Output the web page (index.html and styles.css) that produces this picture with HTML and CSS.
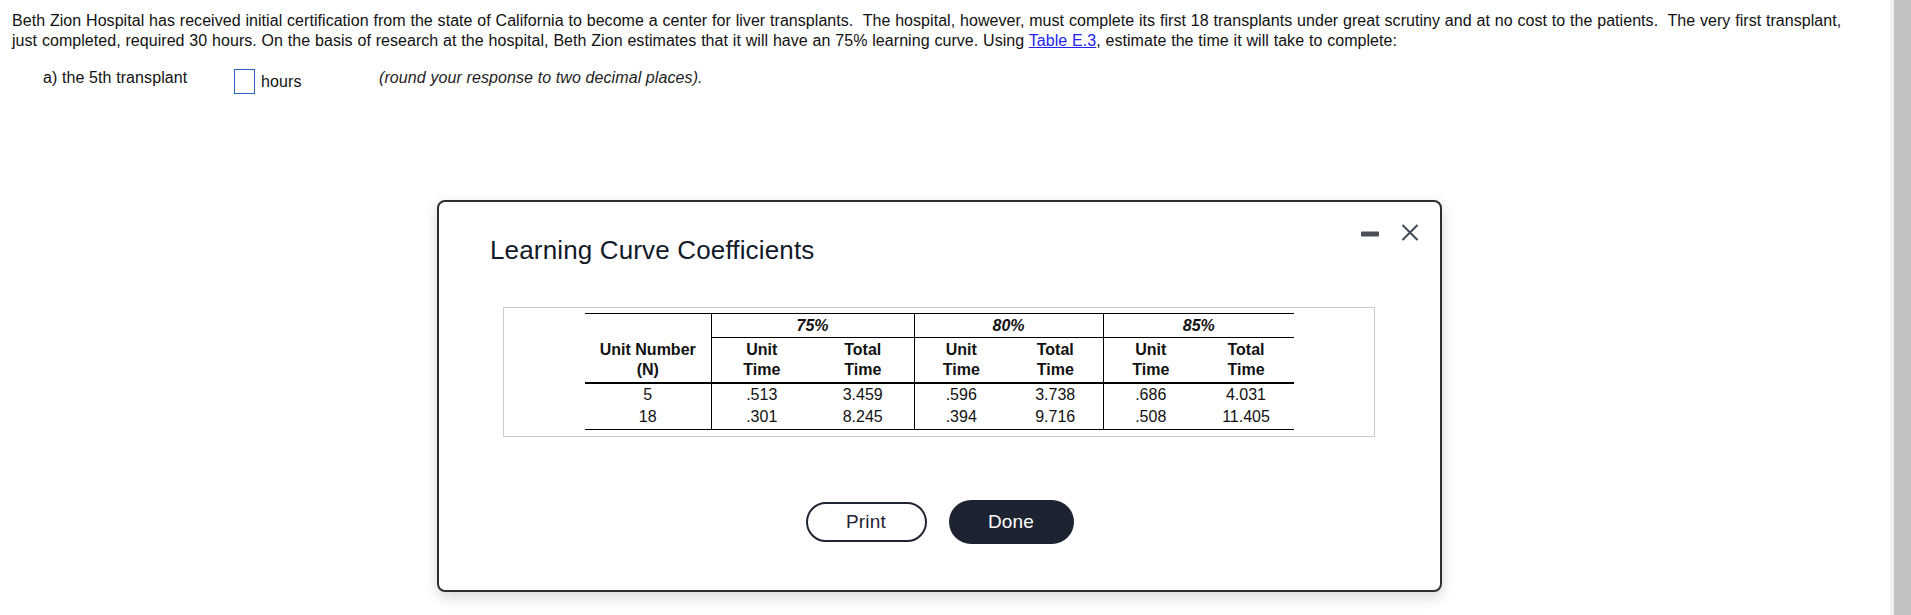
FILE: index.html
```html
<!DOCTYPE html>
<html lang="en">
<head>
<meta charset="utf-8">
<title>Learning Curve Coefficients</title>
<link rel="stylesheet" href="styles.css">
</head>
<body>
<div class="app">
  <main class="main">
    <p class="intro">Beth Zion Hospital has received initial certification from the state of California to become a center for liver transplants.&nbsp; The hospital, however, must complete its first 18 transplants under great scrutiny and at no cost to the patients.&nbsp; The very first transplant, just completed, required 30 hours. On the basis of research at the hospital, Beth Zion estimates that it will have an 75% learning curve. Using <a class="link" href="#">Table E.3</a>, estimate the time it will take to complete:</p>
    <div class="question">
      <span class="q-label">a) the 5th transplant</span>
      <span class="answer-box"></span>
      <span class="unit">hours</span>
      <span class="hint">(round your response to two decimal places).</span>
    </div>

    <div class="dialog">
      <div class="dialog-header">
        <h2 class="dialog-title">Learning Curve Coefficients</h2>
        <div class="dialog-controls">
          <svg class="icon-min" width="18" height="6" viewBox="0 0 18 6"><rect x="0" y="0.5" width="18" height="5" rx="1" fill="#4b4f56"/></svg>
          <svg class="icon-close" width="18" height="17" viewBox="0 0 18 17"><path d="M1.5 1 L16.5 16 M16.5 1 L1.5 16" stroke="#3d4858" stroke-width="2" fill="none"/></svg>
        </div>
      </div>

      <div class="table-box">
        <table class="coef">
          <colgroup>
            <col class="c-n"><col class="c-a"><col class="c-b"><col class="c-c"><col class="c-d"><col class="c-e"><col class="c-f">
          </colgroup>
          <tr class="r-group">
            <th class="blank"></th>
            <th class="grp sep" colspan="2">75%</th>
            <th class="grp sep" colspan="2">80%</th>
            <th class="grp sep" colspan="2">85%</th>
          </tr>
          <tr class="r-head">
            <th>Unit Number<br>(N)</th>
            <th class="sep">Unit<br>Time</th>
            <th>Total<br>Time</th>
            <th class="sep">Unit<br>Time</th>
            <th>Total<br>Time</th>
            <th class="sep">Unit<br>Time</th>
            <th>Total<br>Time</th>
          </tr>
          <tr class="r-data">
            <td>5</td><td class="sep">.513</td><td>3.459</td><td class="sep">.596</td><td>3.738</td><td class="sep">.686</td><td>4.031</td>
          </tr>
          <tr class="r-data r-last">
            <td>18</td><td class="sep">.301</td><td>8.245</td><td class="sep">.394</td><td>9.716</td><td class="sep">.508</td><td>11.405</td>
          </tr>
        </table>
      </div>

      <div class="dialog-actions">
        <button class="btn btn-outline">Print</button>
        <button class="btn btn-solid">Done</button>
      </div>
    </div>
  </main>
  <div class="scrollbar"><div class="scroll-thumb"></div></div>
</div>
</body>
</html>
```

FILE: styles.css
```css
* { box-sizing: border-box; }

html, body {
  margin: 0;
  padding: 0;
  background: #ffffff;
}

body {
  font-family: "Liberation Sans", Arial, sans-serif;
  color: #111111;
  font-size: 16px;
}

.app {
  display: flex;
  width: 1911px;
  height: 615px;
  overflow: hidden;
}

.main {
  position: relative;
  flex: 1;
  padding: 11px 34px 0 12px;
}

.intro {
  margin: 0;
  line-height: 20px;
  letter-spacing: 0.05px;
  word-spacing: 0.3px;
}

.link {
  color: #2323ee;
  text-decoration: underline;
}

.question {
  display: flex;
  align-items: flex-start;
  margin-top: 17px;
  line-height: 20px;
  letter-spacing: 0.1px;
}

.q-label {
  margin-left: 31px;
  width: 191px;
}

.answer-box {
  width: 21px;
  height: 25px;
  margin-top: 1px;
  border: 1px solid #2f62c8;
  background: #fff;
}

.unit {
  margin-left: 6px;
  margin-top: 4px;
  width: 118px;
}

.hint {
  font-style: italic;
  color: #222;
}

/* Dialog */
.dialog {
  position: absolute;
  left: 437px;
  top: 200px;
  width: 1005px;
  height: 392px;
  border: 2px solid #2e2e2e;
  border-radius: 8px;
  background: #fff;
  box-shadow: 0 5px 14px rgba(0, 0, 0, 0.16);
  display: flex;
  flex-direction: column;
}

.dialog-header {
  display: flex;
  justify-content: space-between;
  align-items: flex-start;
  padding: 0 21px 0 51px;
}

.dialog-title {
  margin: 33px 0 0 0;
  font-size: 26px;
  font-weight: normal;
  line-height: 30px;
  letter-spacing: 0.15px;
  color: #131a2a;
}

.dialog-controls {
  display: flex;
  align-items: center;
  gap: 22px;
  margin-top: 22px;
}

.icon-min { display: block; margin-top: 2px; }
.icon-close { display: block; }

.table-box {
  margin: 42px 0 0 64px;
  width: 872px;
  height: 130px;
  border: 1px solid #c9c9c9;
  padding: 5px 0 0 81px;
}

.coef {
  border-collapse: collapse;
  table-layout: fixed;
  width: 709px;
  font-size: 16px;
  color: #111;
}

.c-n { width: 126px; }
.c-a { width: 101px; }
.c-b { width: 102px; }
.c-c { width: 94px; }
.c-d { width: 95px; }
.c-e { width: 95px; }
.c-f { width: 96px; }

.coef th, .coef td {
  padding: 0;
  text-align: center;
}

.coef .sep { border-left: 1px solid #000; }

.r-group th {
  border-top: 1px solid #000;
  height: 24px;
  line-height: 22px;
  font-style: italic;
  font-weight: bold;
}

.r-group .grp { border-bottom: 1px solid #000; }

.r-head th {
  font-weight: bold;
  line-height: 20px;
  padding: 2px 0 2px;
  border-bottom: 2px solid #000;
}

.r-data td {
  height: 22px;
  line-height: 22px;
}

.r-last td {
  border-bottom: 1px solid #000;
  height: 23px;
}

.dialog-actions {
  display: flex;
  justify-content: center;
  align-items: center;
  gap: 22px;
  margin-top: 63px;
  height: 44px;
}

.btn {
  font-family: "Liberation Sans", Arial, sans-serif;
  font-size: 19px;
  letter-spacing: 0.2px;
  border-radius: 22px;
  cursor: pointer;
  padding: 0;
}

.btn-outline {
  width: 121px;
  height: 40px;
  border: 2px solid #1f2532;
  background: #fff;
  color: #1f2532;
}

.btn-solid {
  width: 125px;
  height: 44px;
  border: none;
  background: #1d2330;
  color: #ffffff;
}

/* Scrollbar */
.scrollbar {
  width: 21px;
  height: 615px;
  background: #f0f0f0;
  padding-left: 4px;
}

.scroll-thumb {
  width: 100%;
  height: 100%;
  background: #c1c1c1;
}
```
